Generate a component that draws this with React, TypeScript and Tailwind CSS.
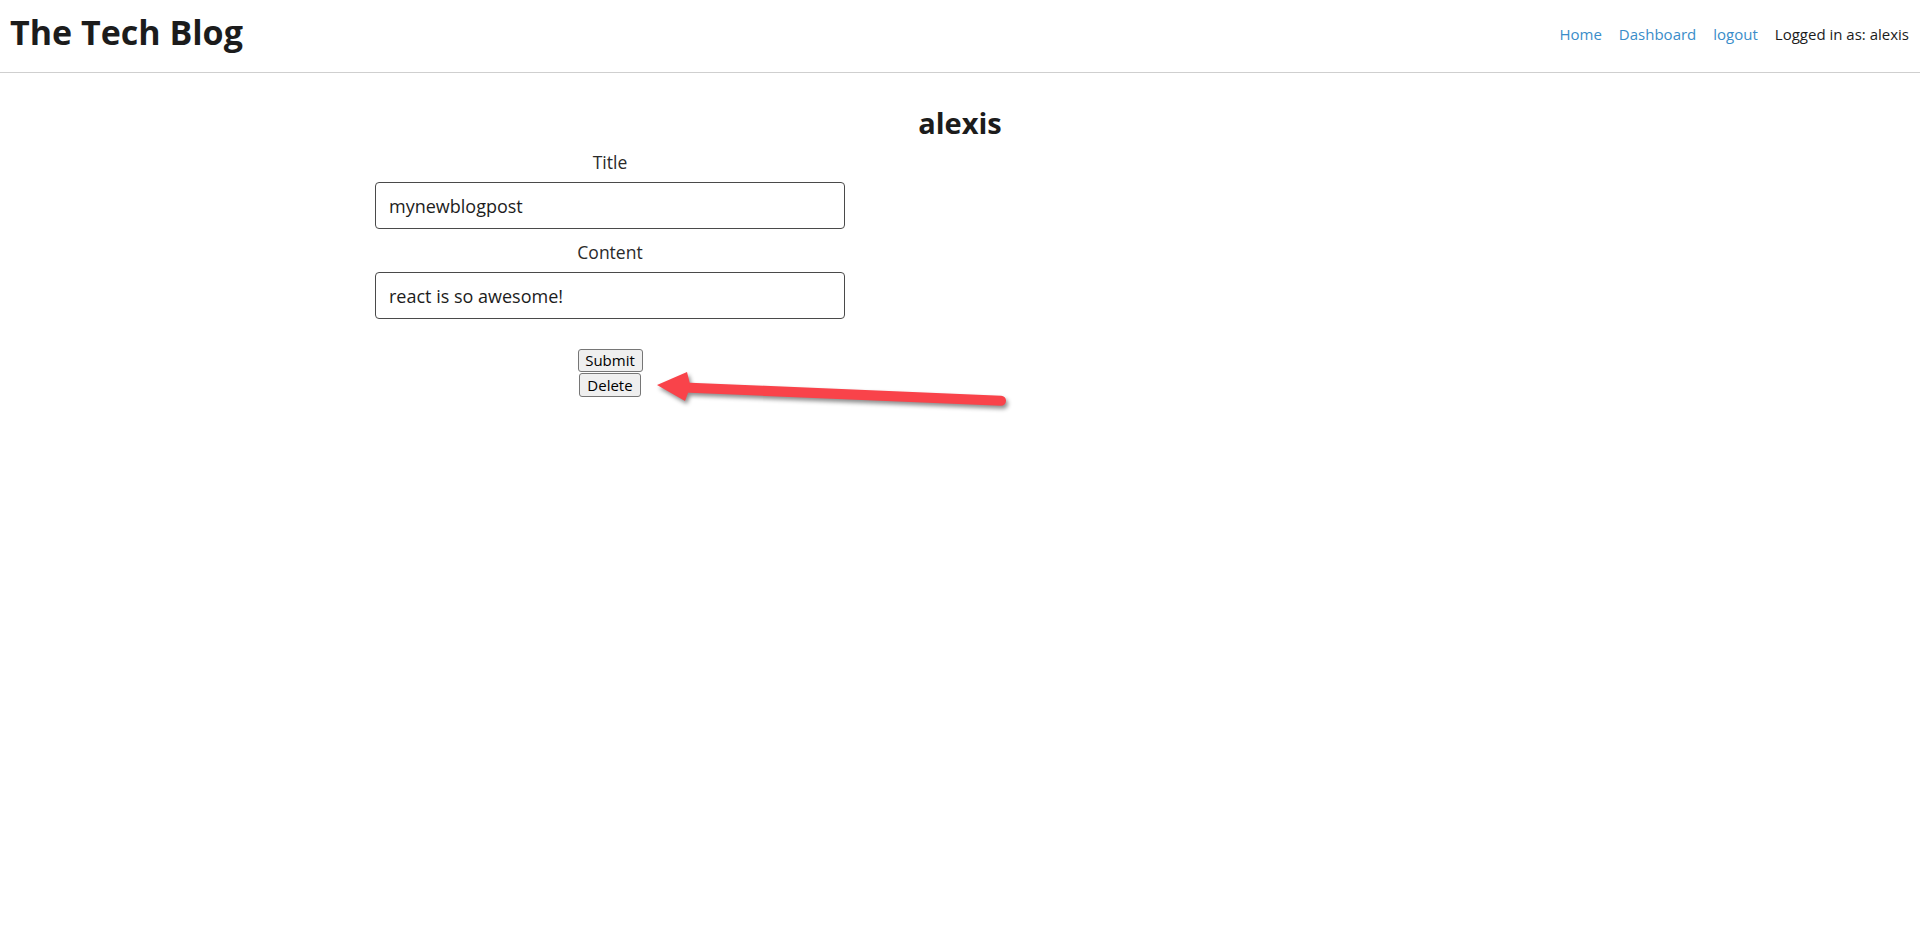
import React from "react";

export default function App() {
  return (
    <div className="relative min-h-[929px] bg-white text-[#212529]" style={{ fontFamily: '"Open Sans", "Noto Sans", sans-serif' }}>
      <header className="flex h-[73px] items-start justify-between border-b border-[#cfcfcf]">
        <h1 className="pl-[10px] pt-[15px] text-[34px] font-bold leading-none text-[#1c1c1c]">The Tech Blog</h1>
        <nav className="flex gap-[17px] pr-[11px] pt-[27px] text-[15px] leading-none">
          <a href="#" className="text-[#3a8dc9]">Home</a>
          <a href="#" className="text-[#3a8dc9]">Dashboard</a>
          <a href="#" className="text-[#3a8dc9]">logout</a>
          <span className="text-[#1c1c1c]">Logged in as: alexis</span>
        </nav>
      </header>

      <main className="mx-auto w-[1200px] pt-[35px]">
        <h2 className="text-center text-[29px] font-bold leading-none text-[#1c1c1c]">alexis</h2>
        <form className="mt-[13px] flex w-[500px] flex-col px-[15px]" onSubmit={(e) => e.preventDefault()}>
          <label className="text-center text-[17.5px] leading-[24px] text-[#2a2a2a]">Title</label>
          <input
            defaultValue="mynewblogpost"
            className="mt-[8px] h-[47px] w-full rounded-[4px] border border-[#4a4a4a] pl-[13px] text-[18px] text-[#1c1c1c] outline-none"
          />
          <label className="mt-[11px] text-center text-[17.5px] leading-[24px] text-[#2a2a2a]">Content</label>
          <input
            defaultValue="react is so awesome!"
            className="mt-[8px] h-[47px] w-full rounded-[4px] border border-[#4a4a4a] pl-[13px] text-[18px] text-[#1c1c1c] outline-none"
          />
          <div className="mt-[30px] flex flex-col items-center">
            <button type="submit" className="h-[23px] w-[65px] rounded-[3px] border border-[#767676] bg-[#efefef] text-[15px] leading-none text-black">
              Submit
            </button>
            <button type="button" className="mt-[1px] h-[24px] w-[62px] rounded-[3px] border border-[#767676] bg-[#efefef] text-[15px] leading-none text-black">
              Delete
            </button>
          </div>
        </form>
      </main>

      <svg className="pointer-events-none absolute left-0 top-0 drop-shadow-[2px_3px_2px_rgba(0,0,0,0.45)]" width="1920" height="929" viewBox="0 0 1920 929">
        <line x1="684" y1="387.5" x2="1001" y2="400.7" stroke="#f9434a" strokeWidth="10" strokeLinecap="round" />
        <polygon points="657,385 687,372 690,384 688,393 685,401" fill="#f9434a" />
      </svg>
    </div>
  );
}
